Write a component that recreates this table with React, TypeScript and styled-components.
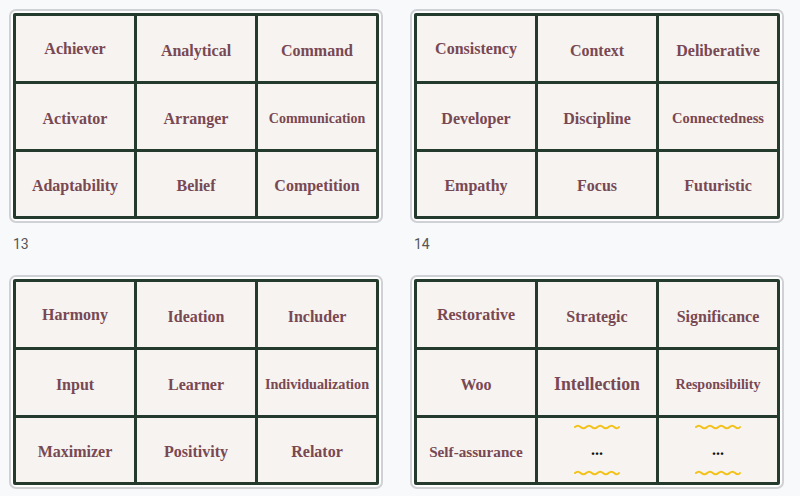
import React from 'react';
import styled, {createGlobalStyle} from 'styled-components';

interface Theme {
    label: string;
    size?: number;
    lift?: boolean;
    pending?: boolean;
}

interface Sheet {
    id: number;
    caption?: string;
    themes: Theme[];
}

const sheets: Sheet[] = [
    {
        id: 13,
        caption: '13',
        themes: [
            {label: 'Achiever', lift: true},
            {label: 'Analytical'},
            {label: 'Command'},
            {label: 'Activator'},
            {label: 'Arranger'},
            {label: 'Communication', size: 14},
            {label: 'Adaptability'},
            {label: 'Belief'},
            {label: 'Competition'},
        ],
    },
    {
        id: 14,
        caption: '14',
        themes: [
            {label: 'Consistency', lift: true},
            {label: 'Context'},
            {label: 'Deliberative'},
            {label: 'Developer'},
            {label: 'Discipline'},
            {label: 'Connectedness', size: 14.5},
            {label: 'Empathy'},
            {label: 'Focus'},
            {label: 'Futuristic'},
        ],
    },
    {
        id: 15,
        themes: [
            {label: 'Harmony', lift: true},
            {label: 'Ideation'},
            {label: 'Includer'},
            {label: 'Input'},
            {label: 'Learner'},
            {label: 'Individualization', size: 14.2},
            {label: 'Maximizer'},
            {label: 'Positivity'},
            {label: 'Relator'},
        ],
    },
    {
        id: 16,
        themes: [
            {label: 'Restorative', lift: true},
            {label: 'Strategic'},
            {label: 'Significance'},
            {label: 'Woo'},
            {label: 'Intellection', size: 17.8},
            {label: 'Responsibility', size: 14},
            {label: 'Self-assurance', size: 15.2},
            {label: '...', pending: true},
            {label: '...', pending: true},
        ],
    },
];

// yellow squiggle drawn above and below the unfinished cells
const Squiggle = () => (
    <svg width="46" height="6" viewBox="0 0 46 6">
        <path
            d="M1 3 Q3.8 0.5 6.6 3 T12.2 3 T17.8 3 T23.4 3 T29 3 T34.6 3 T40.2 3 T45 3"
            fill="none"
            stroke="#f3c21a"
            strokeWidth="2"
            strokeLinecap="round"
        />
    </svg>
);

const App = () => {
    return (
        <>
            <GlobalStyle/>
            <Page>
                {sheets.map((sheet) => (
                    <Figure key={sheet.id}>
                        <Card>
                            <Board>
                                {sheet.themes.map((theme, index) =>
                                    theme.pending ? (
                                        <PendingCell key={index}>
                                            <Squiggle/>
                                            <Dots>{theme.label}</Dots>
                                            <Squiggle/>
                                        </PendingCell>
                                    ) : (
                                        <Cell key={index} $size={theme.size ?? 16} $lift={!!theme.lift}>
                                            {theme.label}
                                        </Cell>
                                    )
                                )}
                            </Board>
                        </Card>
                        {sheet.caption && <Caption>{sheet.caption}</Caption>}
                    </Figure>
                ))}
            </Page>
        </>
    );
};

const GlobalStyle = createGlobalStyle`
    html, body {
        margin: 0;
        overflow: hidden;
        background: #f8f9fa;
    }
`;

const Page = styled.div`
    display: grid;
    grid-template-columns: 374px 374px;
    column-gap: 27px;
    row-gap: 21px;
    padding: 9px 0 0 9px;
`;

const Figure = styled.div`
    display: flex;
    flex-direction: column;
`;

const Card = styled.div`
    border: 2px solid #cfd1d4;
    border-radius: 7px;
    background: #ffffff;
    padding: 2px;
`;

const Board = styled.div`
    display: grid;
    grid-template-columns: repeat(3, 118px);
    grid-template-rows: 65px 65px 64px;
    gap: 3px;
    padding: 3px;
    background: #243a2c;
    border-radius: 2px;
`;

const Cell = styled.div<{ $size: number; $lift: boolean }>`
    display: flex;
    align-items: center;
    justify-content: center;
    padding-top: ${(p) => (p.$lift ? '0' : '4px')};
    background: #f7f3f0;
    color: #784853;
    font-family: "Liberation Serif", "DejaVu Serif", serif;
    font-weight: 700;
    font-size: ${(p) => p.$size}px;
    white-space: nowrap;
`;

const PendingCell = styled.div`
    display: flex;
    flex-direction: column;
    align-items: center;
    justify-content: center;
    gap: 11px;
    background: #f7f3f0;
`;

const Dots = styled.span`
    font-family: "Liberation Serif", serif;
    font-weight: 700;
    font-size: 16px;
    line-height: 18px;
    color: #111111;
`;

const Caption = styled.div`
    margin: 11px 0 0 4px;
    font-family: Roboto, "Liberation Sans", sans-serif;
    font-size: 14px;
    line-height: 20px;
    color: #555555;
`;

export default App;
